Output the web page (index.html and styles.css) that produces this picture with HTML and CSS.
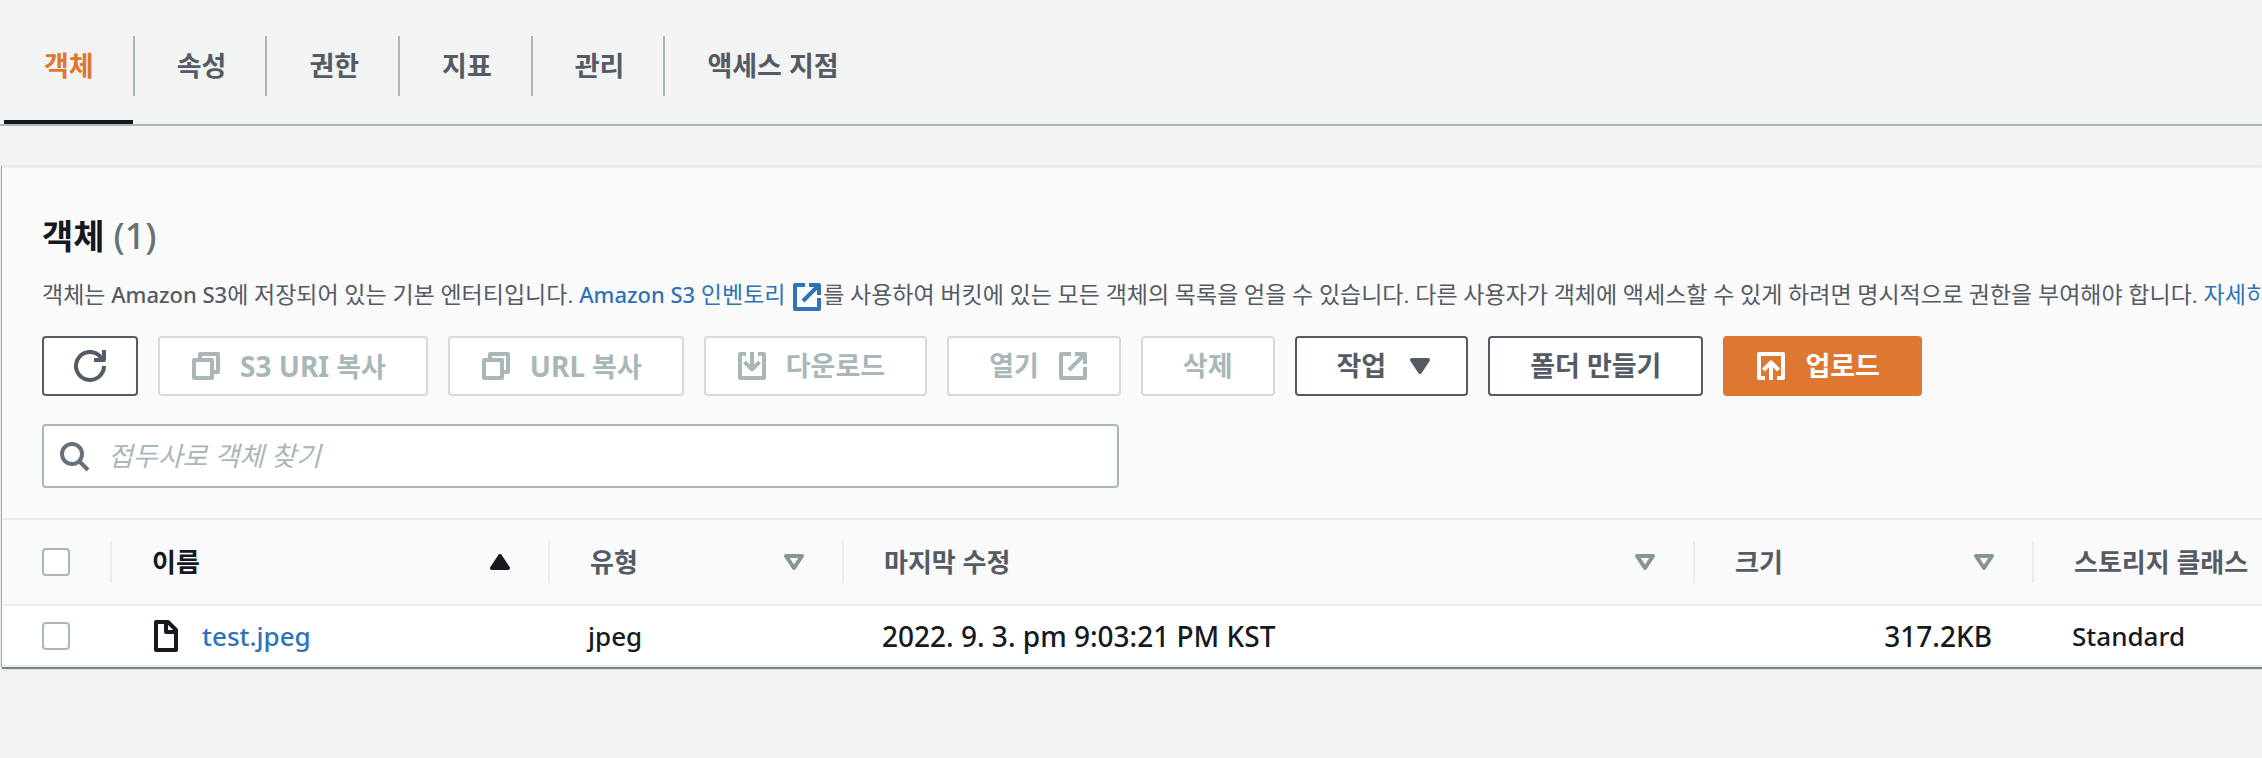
FILE: index.html
```html
<!DOCTYPE html>
<html lang="ko">
<head>
    <meta charset="UTF-8">
    <meta name="viewport" content="width=device-width, initial-scale=1.0">
    <title>S3 버킷 - 객체</title>
    <link rel="stylesheet" href="styles.css">
</head>
<body>

    <!-- 아이콘 -->
    <svg class="sprite" aria-hidden="true">
        <symbol id="icon-refresh" viewBox="0 0 16 16">
            <path d="M15 8A7 7 0 1 1 12.6 2.7L14.5 5M10 5h5V0" />
        </symbol>
        <symbol id="icon-copy" viewBox="0 0 16 16">
            <path d="M2 5h9v9H2z" />
            <path d="M5 5V2h9v9h-3" />
        </symbol>
        <symbol id="icon-download" viewBox="0 0 16 16">
            <path d="M5 2H2v12h12V2h-3M8 1v8M4.2 6L8 9.6 11.8 6" />
        </symbol>
        <symbol id="icon-upload" viewBox="0 0 16 16">
            <path d="M5 14H2V2h12v12h-3M8 15V7M4.2 10L8 6.2l3.8 3.8" />
        </symbol>
        <symbol id="icon-external" viewBox="0 0 16 16">
            <path d="M14 8.5V14H2V2h5M9 2h5v5M6 10l8-8" />
        </symbol>
        <symbol id="icon-search" viewBox="0 0 16 16">
            <circle cx="7" cy="7" r="5" />
            <path d="M10.5 10.5L15 15" />
        </symbol>
        <symbol id="icon-file" viewBox="0 0 16 16">
            <path d="M3 1h6l4 4v10H3zM8 1v5h5" />
        </symbol>
        <symbol id="icon-down" viewBox="0 0 16 16">
            <path class="solid" d="M4 5h8l-4 6z" />
        </symbol>
        <symbol id="icon-up" viewBox="0 0 16 16">
            <path class="solid" d="M4 11h8l-4-6z" />
        </symbol>
        <symbol id="icon-sort" viewBox="0 0 16 16">
            <path d="M4 5h8l-4 6z" />
        </symbol>
    </svg>

    <nav class="tabs">
        <a href="#" class="tab active">객체</a>
        <a href="#" class="tab">속성</a>
        <a href="#" class="tab">권한</a>
        <a href="#" class="tab">지표</a>
        <a href="#" class="tab">관리</a>
        <a href="#" class="tab">액세스 지점</a>
    </nav>

    <main class="panel">
        <header class="panel-header">
            <h2>객체 <span class="count">(1)</span></h2>
            <p class="description">객체는 <span class="latin">Amazon S3</span>에 저장되어 있는 기본 엔터티입니다. <a href="#"><span class="latin">Amazon S3</span> 인벤토리 <svg class="icon"><use href="#icon-external" /></svg></a>를 사용하여 버킷에 있는 모든 객체의 목록을 얻을 수 있습니다. 다른 사용자가 객체에 액세스할 수 있게 하려면 명시적으로 권한을 부여해야 합니다. <a href="#">자세히</a></p>

            <div class="actions">
                <button type="button" class="button icon-only" aria-label="새로 고침"><svg class="icon"><use href="#icon-refresh" /></svg></button>
                <button type="button" class="button icon-left" disabled><svg class="icon"><use href="#icon-copy" /></svg><span><span class="latin">S3 URI</span> 복사</span></button>
                <button type="button" class="button icon-left" disabled><svg class="icon"><use href="#icon-copy" /></svg><span><span class="latin">URL</span> 복사</span></button>
                <button type="button" class="button icon-left" disabled><svg class="icon"><use href="#icon-download" /></svg>다운로드</button>
                <button type="button" class="button icon-right" disabled>열기<svg class="icon"><use href="#icon-external" /></svg></button>
                <button type="button" class="button" disabled>삭제</button>
                <button type="button" class="button icon-right">작업<svg class="icon"><use href="#icon-down" /></svg></button>
                <button type="button" class="button">폴더 만들기</button>
                <button type="button" class="button icon-left primary"><svg class="icon"><use href="#icon-upload" /></svg>업로드</button>
            </div>

            <label class="search">
                <svg class="icon"><use href="#icon-search" /></svg>
                <input type="search" placeholder="접두사로 객체 찾기" aria-label="접두사로 객체 찾기">
            </label>
        </header>

        <table class="objects">
            <colgroup>
                <col class="col-check">
                <col class="col-name">
                <col class="col-type">
                <col class="col-date">
                <col class="col-size">
                <col>
            </colgroup>
            <thead>
                <tr>
                    <th><input type="checkbox" aria-label="모두 선택"></th>
                    <th class="sorted"><div class="head">이름<svg class="icon"><use href="#icon-up" /></svg></div></th>
                    <th><div class="head">유형<svg class="icon"><use href="#icon-sort" /></svg></div></th>
                    <th><div class="head">마지막 수정<svg class="icon"><use href="#icon-sort" /></svg></div></th>
                    <th><div class="head">크기<svg class="icon"><use href="#icon-sort" /></svg></div></th>
                    <th><div class="head">스토리지 클래스</div></th>
                </tr>
            </thead>
            <tbody>
                <tr>
                    <td><input type="checkbox" aria-label="test.jpeg 선택"></td>
                    <td><a href="#" class="file"><svg class="icon"><use href="#icon-file" /></svg>test.jpeg</a></td>
                    <td>jpeg</td>
                    <td class="number">2022. 9. 3. pm 9:03:21 PM KST</td>
                    <td class="number size">317.2KB</td>
                    <td>Standard</td>
                </tr>
            </tbody>
        </table>
    </main>

</body>
</html>
```
FILE: styles.css
```css
* {
    margin: 0;
    padding: 0;
    box-sizing: border-box;
}

body {
    min-height: 100vh;
    font-family: "Noto Sans", "Noto Sans CJK KR", sans-serif;
    font-size: 27px;
    line-height: 40px;
    color: #16191f;
    background: #f2f4f4;
    overflow-x: hidden;
}

a {
    color: #2e73b8;
    text-decoration: none;
}

a:hover {
    text-decoration: underline;
}

.sprite {
    display: none;
}

.icon {
    flex: none;
    width: 32px;
    height: 32px;
    fill: none;
    stroke: currentColor;
    stroke-width: 2;
    stroke-linejoin: round;
    overflow: visible;
}

.solid {
    fill: currentColor;
}

/* 탭 */
.tabs {
    display: flex;
    padding: 36px 0 0 4px;
    border-bottom: 2px solid #aab7b8;
}

.tab {
    padding: 0 43px 28px 40px;
    font-weight: 700;
    line-height: 60px;
    color: #545b64;
    white-space: nowrap;
    background: linear-gradient(#aab7b8, #aab7b8) right 2px top / 2px 60px no-repeat;
}

.tab:last-child {
    background: none;
}

.tab.active {
    position: relative;
    color: #dd7732;
}

.tab.active::after {
    content: "";
    position: absolute;
    left: 0;
    right: 4px;
    bottom: 0;
    height: 4px;
    background: #16191f;
}

/* 객체 패널 */
.panel {
    margin: 40px 0 0 2px;
    background: #fafafa;
    border-top: 2px solid #eaeded;
    border-bottom: 2px solid #eaeded;
    box-shadow: 0 2px 1px 0 #79858a, -1px 0 1px 0 #aab7b8;
}

.panel-header {
    padding: 44px 0 30px 40px;
}

h2 {
    font-size: 34px;
    line-height: 48px;
}

.count {
    font-size: 36px;
    font-weight: 500;
    color: #687078;
}

.description {
    margin-top: 16px;
    font-family: Roboto, "Noto Sans CJK KR", sans-serif;
    font-size: 23px;
    line-height: 36px;
    color: #545b64;
    white-space: nowrap;
}

.latin {
    font-family: "Noto Sans", sans-serif;
    font-size: 28px;
}

.description .latin {
    font-size: 22px;
    font-weight: 500;
}

.description .icon {
    vertical-align: middle;
}

.actions {
    display: flex;
    gap: 20px;
    margin-top: 22px;
}

.button {
    display: flex;
    align-items: center;
    flex: none;
    height: 60px;
    padding: 0 40px;
    font: inherit;
    font-weight: 700;
    color: #545b64;
    background: #fff;
    border: 2px solid #545b64;
    border-radius: 4px;
    white-space: nowrap;
    cursor: pointer;
}

.button:disabled {
    color: #aab7b8;
    border-color: #d5dbdb;
    cursor: default;
}

.button.icon-only {
    padding: 0 30px;
}

.button.icon-left {
    gap: 18px;
    padding-left: 30px;
}

.button.icon-right {
    gap: 18px;
    padding-right: 30px;
}

.button.primary {
    color: #fff;
    background: #dd7732;
    border-color: #dd7732;
}

.search {
    display: flex;
    align-items: center;
    gap: 18px;
    width: 100%;
    max-width: 1077px;
    height: 64px;
    margin-top: 28px;
    padding: 0 14px;
    color: #687078;
    background: #fff;
    border: 2px solid #aab7b8;
    border-radius: 4px;
}

.search input {
    flex: 1;
    font: inherit;
    color: #16191f;
    background: none;
    border: 0;
    outline: 0;
}

.search input::placeholder {
    color: #aab7b8;
    font-style: italic;
}

/* 객체 목록 */
.objects {
    width: 100%;
    table-layout: fixed;
    border-collapse: separate;
    border-spacing: 0;
    font-size: 26px;
    white-space: nowrap;
}

.col-check {
    width: 108px;
}

.col-name {
    width: 438px;
}

.col-type {
    width: 294px;
}

.col-date {
    width: 851px;
}

.col-size {
    width: 339px;
}

.objects th {
    height: 88px;
    padding: 0;
    color: #545b64;
    text-align: left;
    border-top: 2px solid #eaeded;
    border-bottom: 2px solid #eaeded;
}

.objects th:first-child,
.objects td:first-child {
    padding-left: 40px;
}

.head {
    display: flex;
    align-items: center;
    justify-content: space-between;
    height: 42px;
    padding: 0 32px 0 40px;
    border-left: 2px solid #eaeded;
}

.head .icon {
    color: #879596;
}

.objects .sorted,
.sorted .icon {
    color: #16191f;
}

.objects td {
    height: 59px;
    padding: 0 40px;
    font-weight: 500;
    background: #fff;
}

.objects td.number {
    font-size: 28px;
}

.objects td.size {
    text-align: right;
}

.file {
    display: flex;
    align-items: center;
    gap: 20px;
}

.file .icon {
    color: #16191f;
}

input[type="checkbox"] {
    display: block;
    appearance: none;
    width: 28px;
    height: 28px;
    background: #fff;
    border: 2px solid #aab7b8;
    border-radius: 4px;
}

input[type="checkbox"]:checked {
    background: #2e73b8;
}
```
